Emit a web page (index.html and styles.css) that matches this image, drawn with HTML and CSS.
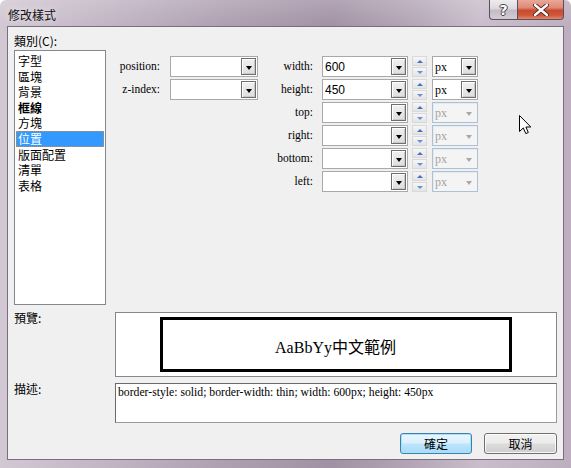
FILE: index.html
```html
<!DOCTYPE html>
<html lang="zh-Hant">
<head>
<meta charset="utf-8">
<title>修改樣式</title>
<link rel="stylesheet" href="styles.css">
</head>
<body>
<div class="window">
  <div class="titlebar">
    <span class="title">修改樣式</span>
    <div class="caption-btns">
      <div class="cap help">?</div>
      <div class="cap close">
        <svg width="16" height="12" viewBox="0 0 16 12"><path d="M2 1 L14 11 M14 1 L2 11" stroke="#4a1c14" stroke-width="4.2" stroke-linecap="round"/><path d="M2 1 L14 11 M14 1 L2 11" stroke="#fff" stroke-width="2.4" stroke-linecap="round"/></svg>
      </div>
    </div>
  </div>
  <div class="client">
    <div class="top">
      <div class="cat">
        <div class="lbl">類別(C):</div>
        <ul class="list">
          <li>字型</li>
          <li>區塊</li>
          <li>背景</li>
          <li class="bold">框線</li>
          <li>方塊</li>
          <li class="sel">位置</li>
          <li>版面配置</li>
          <li>清單</li>
          <li>表格</li>
        </ul>
      </div>
      <div class="form">
        <div class="flbl r1 c1">position:</div>
        <div class="combo r1 c2"><span class="val"></span><span class="drop"></span></div>
        <div class="flbl r2 c1">z-index:</div>
        <div class="combo r2 c2"><span class="val"></span><span class="drop"></span></div>

        <div class="flbl r1 c3">width:</div>
        <div class="combo r1 c4"><span class="val num">600</span><span class="drop"></span></div>
        <div class="spin r1 c5"><span class="up"></span><span class="dn"></span></div>
        <div class="combo unit r1 c6"><span class="val">px</span><span class="drop"></span></div>

        <div class="flbl r2 c3">height:</div>
        <div class="combo r2 c4"><span class="val num">450</span><span class="drop"></span></div>
        <div class="spin r2 c5"><span class="up"></span><span class="dn"></span></div>
        <div class="combo unit r2 c6"><span class="val">px</span><span class="drop"></span></div>

        <div class="flbl r3 c3">top:</div>
        <div class="combo r3 c4"><span class="val"></span><span class="drop"></span></div>
        <div class="spin r3 c5"><span class="up"></span><span class="dn"></span></div>
        <div class="combo unit dis r3 c6"><span class="val">px</span><span class="drop"></span></div>

        <div class="flbl r4 c3">right:</div>
        <div class="combo r4 c4"><span class="val"></span><span class="drop"></span></div>
        <div class="spin r4 c5"><span class="up"></span><span class="dn"></span></div>
        <div class="combo unit dis r4 c6"><span class="val">px</span><span class="drop"></span></div>

        <div class="flbl r5 c3">bottom:</div>
        <div class="combo r5 c4"><span class="val"></span><span class="drop"></span></div>
        <div class="spin r5 c5"><span class="up"></span><span class="dn"></span></div>
        <div class="combo unit dis r5 c6"><span class="val">px</span><span class="drop"></span></div>

        <div class="flbl r6 c3">left:</div>
        <div class="combo r6 c4"><span class="val"></span><span class="drop"></span></div>
        <div class="spin r6 c5"><span class="up"></span><span class="dn"></span></div>
        <div class="combo unit dis r6 c6"><span class="val">px</span><span class="drop"></span></div>
      </div>
    </div>
    <div class="row preview-row">
      <div class="lbl">預覽:</div>
      <div class="preview"><div class="sample">AaBbYy中文範例</div></div>
    </div>
    <div class="row desc-row">
      <div class="lbl">描述:</div>
      <div class="desc">border-style: solid; border-width: thin; width: 600px; height: 450px</div>
    </div>
    <div class="buttons">
      <button class="btn default">確定</button>
      <button class="btn">取消</button>
    </div>
  </div>
  <svg class="cursor" width="13" height="20" viewBox="0 0 13 20"><path d="M0.5 0.5 L0.5 16.5 L4.3 12.9 L6.8 18.6 L9.3 17.5 L6.9 12 L11.8 12 Z" fill="#fff" stroke="#000" stroke-width="1" stroke-linejoin="miter"/></svg>
</div>
</body>
</html>
```
FILE: styles.css
```css
* { box-sizing: border-box; }
html, body { margin: 0; padding: 0; }
body { width: 571px; height: 468px; overflow: hidden; background: #fff; }

.window {
  position: relative;
  width: 571px;
  height: 468px;
  border-radius: 6px 6px 0 0;
  background:
    linear-gradient(180deg, rgba(255,255,255,0.18) 0px, rgba(255,255,255,0) 26px),
    linear-gradient(90deg, #d2c8d3 0%, #c2b5c4 18%, #ad9fb0 40%, #a191a4 58%, #b3a5b5 72%, #c9bdcb 84%, #bcaebe 100%);
  padding: 0 7px 8px 7px;
  display: flex;
  flex-direction: column;
  font-family: "Noto Sans CJK TC", "Liberation Sans", sans-serif;
  font-size: 12px;
  color: #000;
}

.titlebar {
  height: 26px;
  display: flex;
  align-items: flex-start;
  justify-content: space-between;
}
.title {
  margin-top: 7px;
  margin-left: 1px;
  font-size: 12px;
  line-height: 16px;
  color: #111;
  text-shadow: 0 0 6px rgba(255,255,255,0.8);
}
.caption-btns { display: flex; }
.cap {
  height: 20px;
  display: flex;
  align-items: center;
  justify-content: center;
  border: 1px solid #5b4f5f;
  border-top: none;
}
.help {
  width: 28px;
  border-right: none;
  border-radius: 0 0 0 4px;
  background: linear-gradient(180deg, #efedf0 0%, #dcd7de 45%, #c3bbc6 55%, #d3ccd5 100%);
  color: #fff;
  font-family: "DejaVu Sans", sans-serif;
  font-weight: bold;
  font-size: 14px;
  text-shadow: -1px 0 #444, 1px 0 #444, 0 -1px #444, 0 1px #444;
}
.close {
  width: 47px;
  border-radius: 0 0 4px 0;
  background: linear-gradient(180deg, #e9a899 0%, #dd8a75 40%, #c84a2f 55%, #d0563a 80%, #e08a6b 100%);
}

.client {
  flex: 1;
  background: #f0f0f0;
  border: 1px solid #7a6e7e;
  display: flex;
  flex-direction: column;
  padding: 0 6px 0 6px;
}

.top { display: flex; height: 279px; }
.cat { width: 101px; padding-top: 6px; }
.lbl { line-height: 15px; height: 15px; }
.list {
  list-style: none;
  margin: 2px 0 0 0;
  padding: 2px 1px 0 1px;
  width: 92px;
  height: 255px;
  background: #fff;
  border: 1px solid #828790;
}
.list li {
  height: 15.6px;
  line-height: 15.6px;
  padding-left: 2px;
  white-space: nowrap;
}
.list li.bold { font-weight: bold; }
.list li.sel {
  background: #3399ff;
  color: #fff;
  outline: 1px dotted #d08a40;
  outline-offset: -1px;
}

.form {
  padding-top: 29px;
  display: grid;
  grid-template-columns: 55px 88px 64px 90px 20px 46px;
  grid-template-rows: repeat(6, 21px);
  row-gap: 2px;
  align-content: start;
}
.r1 { grid-row: 1; } .r2 { grid-row: 2; } .r3 { grid-row: 3; }
.r4 { grid-row: 4; } .r5 { grid-row: 5; } .r6 { grid-row: 6; }
.c1 { grid-column: 1; } .c2 { grid-column: 2; } .c3 { grid-column: 3; }
.c4 { grid-column: 4; width: 86px; } .c5 { grid-column: 5; } .c6 { grid-column: 6; }

.flbl {
  font-family: "Liberation Serif", serif;
  font-size: 11.5px;
  text-align: right;
  line-height: 21px;
  white-space: nowrap;
}
.c1.flbl { padding-right: 10px; }
.c3.flbl { padding-right: 9px; }

.combo {
  height: 21px;
  border: 1px solid #a9a9a9;
  background: #fff;
  display: flex;
  align-items: center;
  justify-content: space-between;
  padding: 0 1px 0 2px;
}
.val {
  font-family: "Liberation Serif", serif;
  font-size: 12px;
  line-height: 16px;
}
.val.num { font-family: "Liberation Sans", sans-serif; }
.drop {
  width: 15px;
  height: 17px;
  border: 1px solid #6e6e6e;
  box-shadow: inset 1px 1px 0 #fff, inset -1px -1px 0 #c9c9c9;
  background: linear-gradient(180deg, #f0f0f0, #dedede);
  display: flex;
  justify-content: center;
  align-items: flex-end;
  padding-bottom: 4px;
}
.drop::after {
  content: "";
  width: 0;
  height: 0;
  border-top: 4px solid #000;
  border-left: 3.5px solid transparent;
  border-right: 3.5px solid transparent;
}
.combo.dis {
  border-color: #adc0d6;
  background: #f4f4f4;
  box-shadow: inset 1px 1px 0 #e3ebf4;
}
.combo.dis .val { color: #a3a3a3; }
.combo.dis .drop {
  border-color: transparent;
  box-shadow: none;
  background: transparent;
}
.combo.dis .drop::after { border-top-color: #a8a8a8; }

.spin {
  width: 15px;
  height: 21px;
  display: flex;
  flex-direction: column;
  gap: 1px;
}
.spin span {
  flex: 1;
  border: 1px solid #d9d9d9;
  background: linear-gradient(180deg, #f6f6f6, #e4e4e4);
  display: flex;
  justify-content: center;
  align-items: center;
}
.spin .up::after {
  content: "";
  border-bottom: 3px solid #4a6fbf;
  border-left: 3px solid transparent;
  border-right: 3px solid transparent;
}
.spin .dn::after {
  content: "";
  border-top: 3px solid #6d8fd6;
  border-left: 3px solid transparent;
  border-right: 3px solid transparent;
}

.row { display: flex; }
.row .lbl { width: 101px; line-height: 12px; }
.preview-row { margin-top: 6px; }
.preview {
  width: 442px;
  height: 65px;
  background: #fff;
  border: 1px solid #828790;
  display: flex;
  justify-content: center;
  align-items: flex-start;
}
.sample {
  margin-top: 4px;
  width: 352px;
  height: 55px;
  border: 3px solid #000;
  text-align: center;
  font-family: "Liberation Serif", "Noto Sans CJK TC", serif;
  font-size: 16px;
  line-height: 20px;
  padding-top: 18px;
  margin-left: -1px;
}
.desc-row { margin-top: 6px; }
.desc {
  width: 442px;
  height: 40px;
  background: #fff;
  border: 1px solid #9a9a9a;
  border-top-color: #6a6a6a;
  border-left-color: #6a6a6a;
  padding: 1px 2px;
  font-family: "Liberation Serif", serif;
  font-size: 11.7px;
  line-height: 15px;
  white-space: nowrap;
}
.buttons {
  margin-top: 10px;
  display: flex;
  justify-content: flex-end;
  gap: 12px;
}
.btn {
  width: 73px;
  height: 21px;
  padding: 0;
  border: 1px solid #707070;
  border-radius: 3px;
  background: linear-gradient(180deg, #f2f2f2 0%, #ebebeb 49%, #dddddd 51%, #cfcfcf 100%);
  box-shadow: inset 0 0 0 1px rgba(255,255,255,0.8);
  font-family: "Noto Sans CJK TC", "Liberation Sans", sans-serif;
  font-size: 12px;
  line-height: 17px;
  color: #000;
}
.btn.default {
  width: 72px;
  border-color: #3c7fb1;
  background: linear-gradient(180deg, #eaf6fd 0%, #d9f0fc 49%, #bee6fd 51%, #a7d9f5 100%);
  box-shadow: inset 0 0 0 1px #a8e0f8;
}

.cursor {
  position: absolute;
  left: 519px;
  top: 115px;
}
```
